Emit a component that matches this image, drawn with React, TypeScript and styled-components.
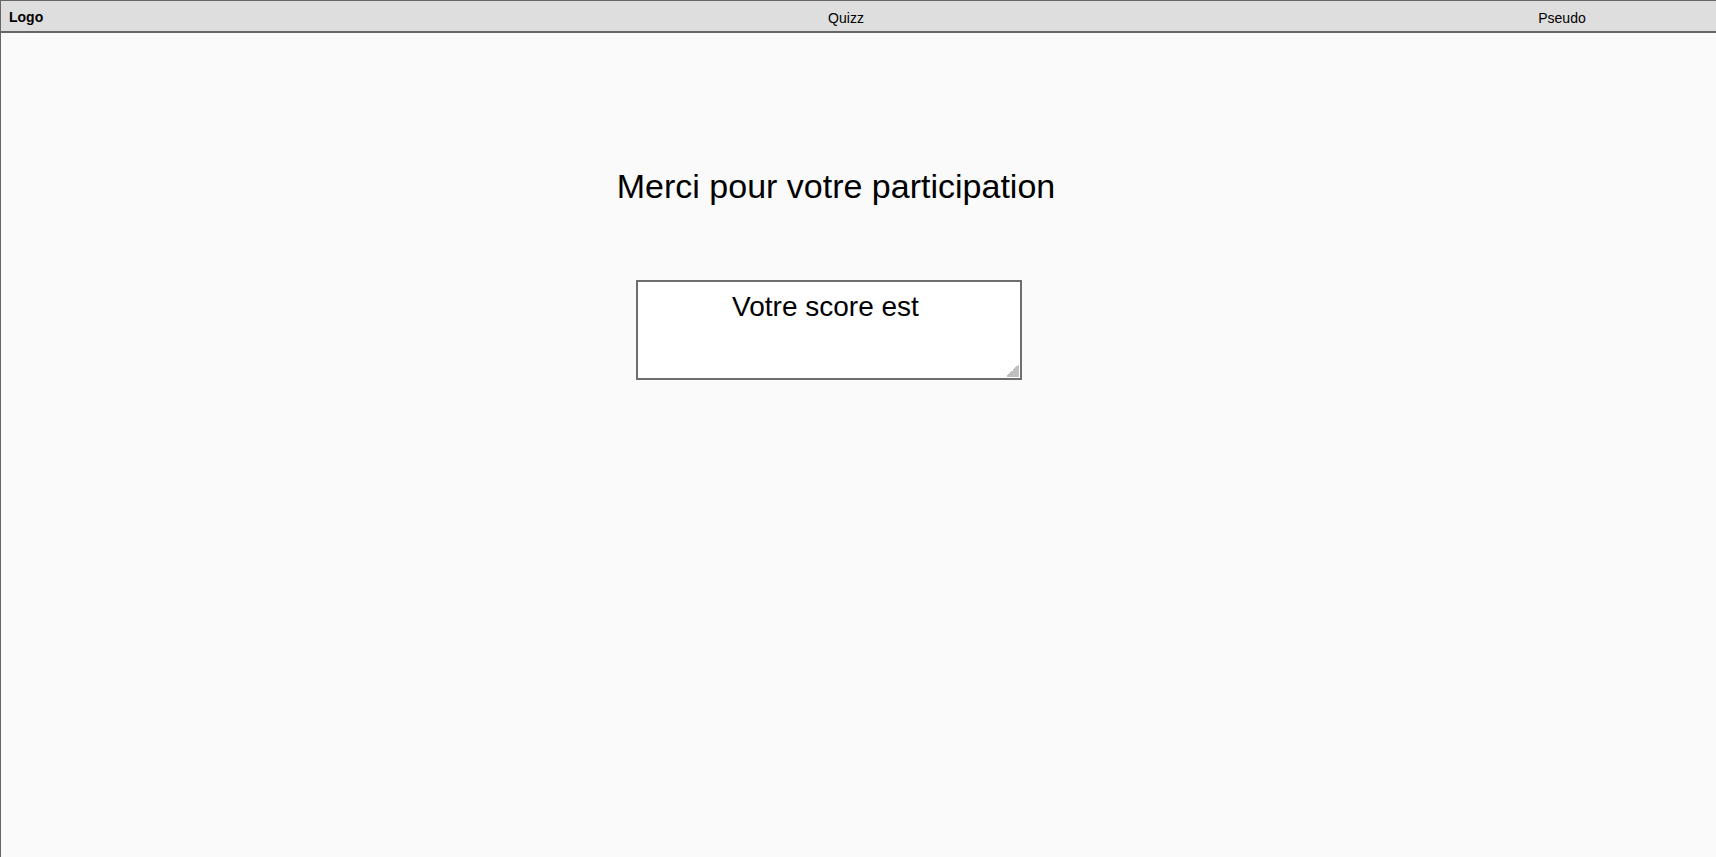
import React from "react";
import styled, {createGlobalStyle} from "styled-components";

const GlobalStyle = createGlobalStyle`
  html, body {
    margin: 0;
    padding: 0;
    background: #fafafa;
    overflow: hidden;
  }

  body {
    font-family: "Liberation Sans", Arial, sans-serif;
    color: #000;
  }
`;

const Page = styled.div`
  width: 1920px;
  min-height: 100vh;
  border-left: 1px solid #666;
  box-sizing: border-box;
`;

const Header = styled.header`
  display: grid;
  grid-template-columns: 487px 716px 716px;
  align-items: center;
  height: 33px;
  box-sizing: border-box;
  padding-top: 3px;
  border-top: 1px solid #666;
  border-bottom: 2px solid #666;
  background: #dedede;
  font-size: 14px;

  .logo {
    font-weight: 700;
    padding-left: 8px;
    margin-top: -2px;
  }

  .link {
    text-align: center;
  }
`;

const Main = styled.main`
  width: 1670px;
  display: flex;
  flex-direction: column;
  align-items: center;

  h1 {
    font-size: 34px;
    font-weight: 400;
    margin: 133px 0 0 0;
    line-height: 40px;
  }
`;

const ScoreBox = styled.textarea`
  width: 386px;
  height: 100px;
  box-sizing: border-box;
  margin: 74px 15px 0 0;
  padding: 9px 9px 8px 3px;
  border: 2px solid #6e6e6e;
  background: #fff;
  font-family: "Liberation Sans", Arial, sans-serif;
  font-size: 28px;
  text-align: center;
  color: #000;
  outline: none;

  &::-webkit-resizer {
    background: linear-gradient(135deg, transparent 50%, #bfbfbf 50%) no-repeat right 1px bottom 1px / 13px 13px;
  }
`;

const App = () => {
    return (
        <Page>
            <GlobalStyle/>
            <Header>
                <div className="logo">Logo</div>
                <div className="link">Quizz</div>
                <div className="link">Pseudo</div>
            </Header>
            <Main>
                <h1>Merci pour votre participation</h1>
                <ScoreBox defaultValue="Votre score est"/>
            </Main>
        </Page>
    )
}

export default App
